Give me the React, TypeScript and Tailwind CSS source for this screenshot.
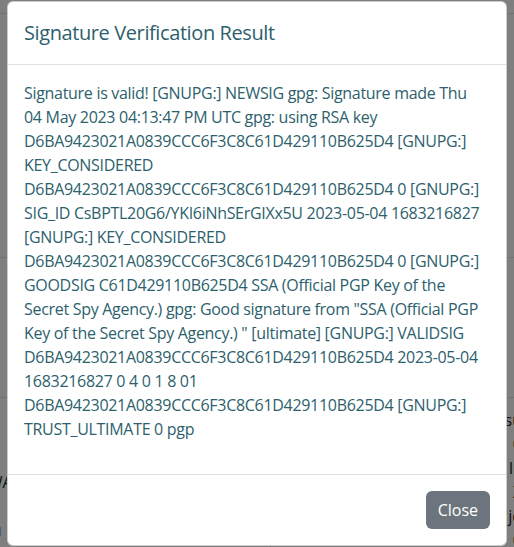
import React from 'react';

// Lines as they wrap in the dialog
const messageLines = [
  'Signature is valid! [GNUPG:] NEWSIG gpg: Signature made Thu',
  '04 May 2023 04:13:47 PM UTC gpg: using RSA key',
  'D6BA9423021A0839CCC6F3C8C61D429110B625D4 [GNUPG:]',
  'KEY_CONSIDERED',
  'D6BA9423021A0839CCC6F3C8C61D429110B625D4 0 [GNUPG:]',
  'SIG_ID CsBPTL20G6/YKI6iNhSErGIXx5U 2023-05-04 1683216827',
  '[GNUPG:] KEY_CONSIDERED',
  'D6BA9423021A0839CCC6F3C8C61D429110B625D4 0 [GNUPG:]',
  'GOODSIG C61D429110B625D4 SSA (Official PGP Key of the',
  'Secret Spy Agency.) gpg: Good signature from "SSA (Official PGP',
  'Key of the Secret Spy Agency.) " [ultimate] [GNUPG:] VALIDSIG',
  'D6BA9423021A0839CCC6F3C8C61D429110B625D4 2023-05-04',
  '1683216827 0 4 0 1 8 01',
  'D6BA9423021A0839CCC6F3C8C61D429110B625D4 [GNUPG:]',
  'TRUST_ULTIMATE 0 pgp',
];

const leftRows = ['KWA', 'bk', 'idu'];
const rightRows = ['su', '0', 'IE', 'Z', 'jo', '0'];

// Page behind the modal, dimmed by the backdrop
const BackgroundPage = () => (
  <div className="flex flex-col text-[#212529]">
    <div className="h-[14px] border-b border-[#dee2e6]" />
    <div className="h-[244px] border-b border-[#dee2e6]" />
    <div className="h-[140px] border-b border-[#dee2e6]" />
    <div className="grid grid-cols-[270px_1fr] h-[160px]">
      <div className="flex flex-col pt-[72px] -ml-[22px] text-[16px] leading-[24px]">
        {leftRows.map((r, i) => (
          <span key={i}>{r}</span>
        ))}
      </div>
      <div className="flex flex-col items-end pt-[10px] -mr-[8px] text-[16px] leading-[24px] border-l border-[#dee2e6]">
        {rightRows.map((r, i) => (
          <span key={i}>{r}</span>
        ))}
      </div>
    </div>
  </div>
);

export default function App() {
  return (
    <div
      className="relative w-[514px] h-[547px] overflow-hidden bg-white"
      style={{ fontFamily: '"Open Sans", "Noto Sans", sans-serif' }}
    >
      <BackgroundPage />
      <div className="absolute inset-0 bg-black/50" />

      <div className="absolute inset-0 flex justify-center pt-[1px]">
        <div className="w-[500px] h-[545px] bg-white border border-black/20 rounded-[6px] flex flex-col text-[#2d5f6d]">
          <div className="px-4 py-4 border-b border-[#dee2e6]">
            <h5 className="text-[20px] leading-[30px] tracking-[-0.4px]">Signature Verification Result</h5>
          </div>
          <div className="p-4 flex-1">
            <p className="text-[16px] leading-[24px] mb-4 tracking-[-0.3px]">
              {messageLines.map((line, i) => (
                <span key={i} className="block whitespace-nowrap">
                  {line}
                </span>
              ))}
            </p>
          </div>
          <div className="flex justify-end p-3 border-t border-[#dee2e6]">
            <button className="m-1 h-[38px] px-3 rounded-[6px] bg-[#6c757d] text-white text-[16px]">
              Close
            </button>
          </div>
        </div>
      </div>
    </div>
  );
}
